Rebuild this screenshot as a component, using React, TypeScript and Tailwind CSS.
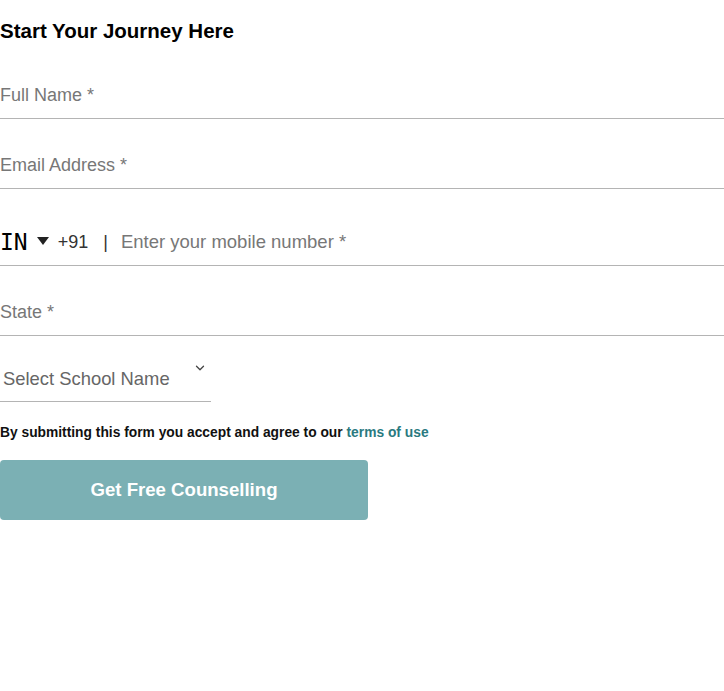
import { ChevronDown } from "lucide-react";

const font = "font-['Liberation_Sans',Arial,sans-serif]";

function Field({ placeholder, className = "" }: { placeholder: string; className?: string }) {
  return (
    <div className={`border-b border-[#b4b4b4] ${className}`}>
      <input
        type="text"
        placeholder={placeholder}
        className="h-[46px] w-full bg-transparent text-[18px] text-[#333] outline-none placeholder:text-[#777]"
      />
    </div>
  );
}

export default function App() {
  return (
    <div className={`min-h-[691px] w-[724px] bg-white ${font}`}>
      <h2 className="pt-[19px] text-[20.5px] leading-[24px] font-bold text-black">
        Start Your Journey Here
      </h2>

      <form className="flex flex-col">
        <Field placeholder="Full Name *" className="mt-[29px]" />
        <Field placeholder="Email Address *" className="mt-[23px]" />

        <div className="mt-[30px] flex h-[47px] items-center border-b border-[#b4b4b4]">
          <span className="font-['DejaVu_Sans_Mono',monospace] text-[23px] leading-none text-black">IN</span>
          <svg width="12" height="8" viewBox="0 0 12 8" className="ml-[9px] mt-[-3px]">
            <path d="M0 0h12L6 8z" fill="#222" />
          </svg>
          <span className="ml-[9px] text-[18px] text-[#333]">+91</span>
          <span className="ml-[15px] text-[18px] text-[#333]">|</span>
          <input
            type="tel"
            placeholder="Enter your mobile number *"
            className="ml-[13px] h-full flex-1 bg-transparent text-[18.5px] text-[#333] outline-none placeholder:text-[#777]"
          />
        </div>

        <Field placeholder="State *" className="mt-[23px]" />

        <div className="relative mt-[21px] w-[211px] border-b border-[#b4b4b4]">
          <select className="h-[44px] w-full appearance-none bg-transparent pl-[3px] text-[18.4px] text-[#666] outline-none">
            <option>Select School Name</option>
          </select>
          <ChevronDown
            size={14}
            strokeWidth={2.2}
            className="pointer-events-none absolute right-[4px] top-[4px] text-[#444]"
          />
        </div>

        <p className="mt-[23px] text-[13.8px] leading-[16px] font-bold text-[#111]">
          By submitting this form you accept and agree to our{" "}
          <a href="#" className="text-[#2a7a80]">terms of use</a>
        </p>

        <button
          type="button"
          className="mt-[19px] h-[60px] w-[368px] rounded-[4px] bg-[#7bb0b4] text-[18.6px] font-bold text-white"
        >
          Get Free Counselling
        </button>
      </form>
    </div>
  );
}
